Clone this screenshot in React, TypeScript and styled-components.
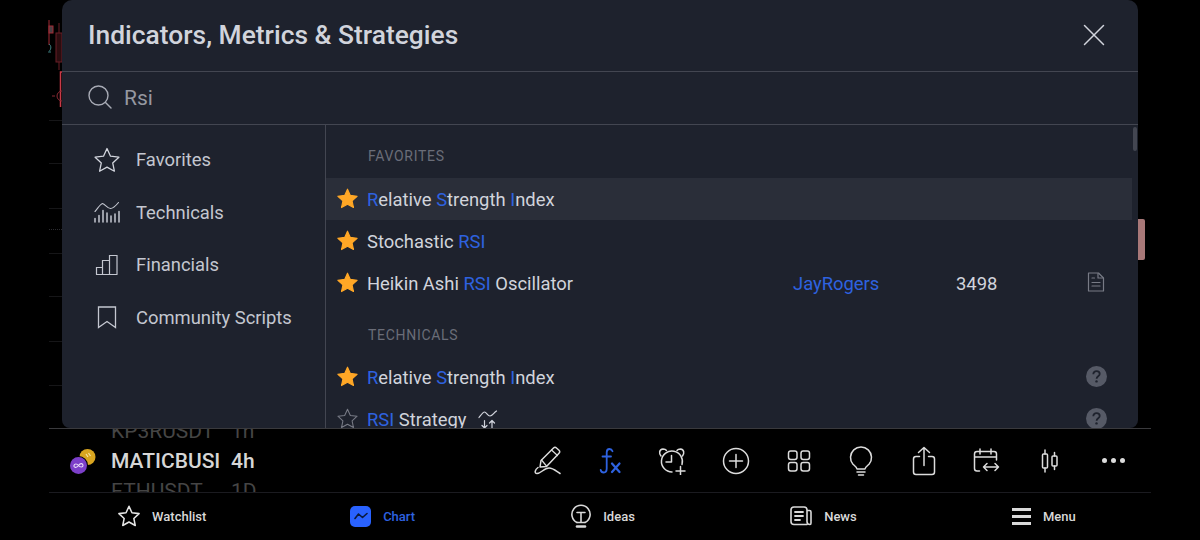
import React from 'react';
import styled, { createGlobalStyle } from 'styled-components';

const Global = createGlobalStyle`
  html, body {
    margin: 0;
    padding: 0;
    background: #000;
    overflow: hidden;
  }
  * { box-sizing: border-box; }
`;

const BLUE = '#2e62e0';

function Star({ size = 26, filled = false, color = '#d1d4dc', width = 1.4 }: { size?: number; filled?: boolean; color?: string; width?: number }) {
  return (
    <svg width={size} height={size} viewBox="0 0 26 26" fill={filled ? color : 'none'} stroke={color} strokeWidth={width} strokeLinejoin="round">
      <path d="M13 1.5l3.5 7.7 8.4 1-6.2 5.7 1.7 8.3L13 20.1l-7.400 4.100 1.700-8.300-6.200-5.700 8.400-1z" />
    </svg>
  );
}

const line = { fill: 'none', stroke: 'currentColor', strokeLinecap: 'round', strokeLinejoin: 'round' } as const;

const TechnicalsIcon = () => (
  <svg width="26" height="22" viewBox="0 0 26 22" {...line} strokeWidth="1.1">
    <path d="M1 10.500C3.500 8 6 3 8.500 2.500c2.500.5 5 5 8 5 3 0 5.500-3 8-6" />
    <path d="M1 17.500V21M5 14.500V21M9 9.500V21M13 12V21M17 15V21M21 13V21M25 10.500V21" strokeWidth="1.500" />
  </svg>
);

const FinancialsIcon = () => (
  <svg width="24" height="22" viewBox="0 0 24 22" {...line} strokeWidth="1.200" strokeLinecap="butt" strokeLinejoin="miter">
    <path d="M1.500 20.500V13.500H7.500V20.500M7.500 20.500V6.500H14.500V20.500M14.500 20.500V1.500H22V20.500M1 20.500H22.500" />
  </svg>
);

const BookmarkIcon = () => (
  <svg width="20" height="23" viewBox="0 0 20 23" {...line} strokeWidth="1.300" strokeLinejoin="miter">
    <path d="M1.500 1H18.500V21.500L10 15.500 1.500 21.500z" />
  </svg>
);

const DocIcon = () => (
  <svg width="18" height="20" viewBox="0 0 18 20" fill="none" stroke="#787b86" strokeWidth="1.200" strokeLinecap="round" strokeLinejoin="round">
    <path d="M1.500 1H11.500L16.500 6V19H1.500z" />
    <path d="M11 1.500V6H16M5 6H7.500M5 10.500H13M5 14H13" />
  </svg>
);

const HelpIcon = () => (
  <svg width="21" height="21" viewBox="0 0 21 21">
    <circle cx="10.500" cy="10.500" r="10.500" fill="#565a66" />
    <path d="M7.300 8.200c0-1.900 1.400-3 3.200-3s3.200 1.100 3.200 2.800c0 2.300-3.100 2.300-3.100 4.700" fill="none" stroke="#1e222d" strokeWidth="1.800" />
    <circle cx="10.500" cy="15.400" r="1.200" fill="#1e222d" />
  </svg>
);

const StrategyIcon = () => (
  <svg width="20" height="19" viewBox="0 0 20 19" fill="none" stroke="#d1d4dc" strokeWidth="1.200" strokeLinecap="round" strokeLinejoin="round">
    <path d="M1 7.500C3 5 5 2 6.500 2c2 0 3 4 5.500 4s3.500-3 6.500-5" />
    <path d="M6.500 10.500V18M4 15.500L6.500 18 9 15.500M14 18V10.500M11.500 13L14 10.500 16.500 13" />
  </svg>
);

const ToolIcon = styled.svg.attrs({ fill: 'none', stroke: 'currentColor', strokeLinecap: 'round', strokeLinejoin: 'round' })`
  display: block;
`;

const tools = [
  {
    key: 'draw',
    w: 28,
    h: 30,
    node: (
      <>
        <path d="M20.500 2c1-1 2-1 3 0l2.500 2.300c1 1 1 2 0 3L13.500 20.500 7 21 8 14.500z" />
        <path d="M8.500 14l5 6M18.500 4l6 5.500" strokeWidth="1.200" />
        <path d="M5 21.500C2 23.500 1 27.500 4 27.500c4 0 7-5.500 12-5.500 4 0 7 3 11 5.500" />
      </>
    ),
  },
  {
    key: 'fx',
    w: 22,
    h: 26,
    blue: true,
    node: (
      <>
        <path d="M13.500 3.200C13 1.800 11.700 1 10.500 1 8.500 1 7.700 2.500 7.700 4.500v16c0 2.500-1 4-3 4-1.500 0-2.700-1-3-2.500M3.500 8.500H12" strokeWidth="1.800" />
        <path d="M13 15.500l7.500 8.500M20.500 15.500L13 24" strokeWidth="2.200" />
      </>
    ),
  },
  {
    key: 'alert',
    w: 30,
    h: 28,
    node: (
      <>
        <path d="M14 25a10.500 10.500 0 1 1 10-7.500" />
        <path d="M13.500 8.500V15H8" />
        <path d="M3 9C.8 6.500 1 2.500 5 2c1.500 0 2.800.5 3.500 1.500M24.500 9c2-2.500 1.800-6.500-2-7-1.500 0-2.800.5-3.500 1.500" />
        <path d="M22.500 19.500V28M18 24h9" />
      </>
    ),
  },
  {
    key: 'plus',
    w: 28,
    h: 28,
    node: (
      <>
        <circle cx="14" cy="14" r="12.500" />
        <path d="M14 7.500V20.500M7.500 14H20.500" />
      </>
    ),
  },
  {
    key: 'layouts',
    w: 24,
    h: 22,
    node: (
      <>
        <rect x="1.500" y="1" width="8.500" height="8.500" rx="2.200" />
        <rect x="14" y="1" width="8.500" height="8.500" rx="2.200" />
        <rect x="1.500" y="12.500" width="8.500" height="8.500" rx="2.200" />
        <rect x="14" y="12.500" width="8.500" height="8.500" rx="2.200" />
      </>
    ),
  },
  {
    key: 'idea',
    w: 24,
    h: 30,
    node: (
      <>
        <path d="M8 23c-.2-1.800-2-3-4-4.700A10.500 10.500 0 1 1 20 18.300C18 20 16.200 21.200 16 23z" />
        <path d="M8 26H16M9.500 29H14.500" />
      </>
    ),
  },
  {
    key: 'share',
    w: 24,
    h: 30,
    node: (
      <>
        <path d="M7.500 10.500H4c-1.500 0-2.500 1-2.500 2.500v13c0 1.500 1 2.500 2.500 2.500h16c1.500 0 2.500-1 2.500-2.500V13c0-1.500-1-2.500-2.500-2.500h-3.500" />
        <path d="M12 19.500V1.500M6.500 6.500L12 1.500l5.500 5" />
      </>
    ),
  },
  {
    key: 'range',
    w: 28,
    h: 25,
    node: (
      <>
        <path d="M6.500 23H4c-1.500 0-2.500-1-2.500-2.500V6c0-1.500 1-2.500 2.500-2.500h17c1.500 0 2.500 1 2.500 2.500v6M1.500 9H23.500M7 1V6M18 1V6" />
        <path d="M10.500 19H25.500M14 15.500L10.500 19l3.500 3.500M22 15.500l3.500 3.500-3.500 3.500" />
      </>
    ),
  },
  {
    key: 'bars',
    w: 18,
    h: 24,
    node: (
      <>
        <rect x="1.500" y="5" width="5" height="14" rx="1" />
        <rect x="11" y="7" width="5" height="10" rx="1" />
        <path d="M4 1V5M4 19V23M13.500 3.500V7M13.500 17V20.500" />
      </>
    ),
  },
];

const filters = [
  { label: 'Favorites', icon: <Star size={26} width={1.3} /> },
  { label: 'Technicals', icon: <TechnicalsIcon /> },
  { label: 'Financials', icon: <FinancialsIcon /> },
  { label: 'Community Scripts', icon: <BookmarkIcon /> },
];

const App = () => (
  <Page>
    <Global />
    <ChartScrap width="16" height="100" viewBox="0 0 16 100" fill="none">
      <path d="M1 2V27" stroke="#a32a35" />
      <rect x="1" y="8" width="4" height="7" fill="#4a4045" stroke="#a32a35" />
      <rect x="8" y="15" width="6" height="29" fill="#2b0d10" stroke="#6a1f27" />
      <path d="M11 5V15M11 44V52" stroke="#6a1f27" />
      <path d="M1 26c3 2 2 6-.500 8H3" stroke="#3e7f80" />
      <path d="M14 54H12.500V89" stroke="#c93a48" strokeWidth="1.500" />
      <path d="M14 73a5 5 0 0 0 0 10M4 78H7" stroke="#8c2b35" />
    </ChartScrap>
    <Grid>
      {[120, 163, 208, 253, 296, 341, 385].map((y) => (
        <GridLine key={y} $y={y} />
      ))}
      <DottedLine />
    </Grid>
    <Handle />
    <ModalArea>
      <Modal>
        <Header>
          <Title>Indicators, Metrics &amp; Strategies</Title>
          <CloseIcon width="22" height="22" viewBox="0 0 22 22" fill="none" stroke="#d1d4dc" strokeWidth="1.500" strokeLinecap="round">
            <path d="M1.500 1.500L20.500 20.500M20.500 1.500L1.500 20.500" />
          </CloseIcon>
        </Header>
        <SearchBar>
          <svg width="24" height="24" viewBox="0 0 24 24" fill="none" stroke="#a8abb5" strokeWidth="1.400" strokeLinecap="round">
            <circle cx="10.500" cy="10.500" r="9.500" />
            <path d="M17.500 17.500L23 23" />
          </svg>
          <SearchText>Rsi</SearchText>
        </SearchBar>
        <Body>
          <Sidebar>
            {filters.map((f) => (
              <Filter key={f.label}>
                <FilterIcon>{f.icon}</FilterIcon>
                {f.label}
              </Filter>
            ))}
          </Sidebar>
          <List>
            <Section>Favorites</Section>
            <Row $active>
              <Star size={21} filled color="#ffa726" />
              <Name>
                <Hit>R</Hit>elative <Hit>S</Hit>trength <Hit>I</Hit>ndex
              </Name>
            </Row>
            <Row>
              <Star size={21} filled color="#ffa726" />
              <Name>
                Stochastic <Hit>RSI</Hit>
              </Name>
            </Row>
            <Row>
              <Star size={21} filled color="#ffa726" />
              <Name>
                Heikin Ashi <Hit>RSI</Hit> Oscillator
              </Name>
              <Author>JayRogers</Author>
              <Name>3498</Name>
              <RowIcon>
                <DocIcon />
              </RowIcon>
            </Row>
            <Section>Technicals</Section>
            <Row>
              <Star size={21} filled color="#ffa726" />
              <Name>
                <Hit>R</Hit>elative <Hit>S</Hit>trength <Hit>I</Hit>ndex
              </Name>
              <span />
              <span />
              <RowIcon>
                <HelpIcon />
              </RowIcon>
            </Row>
            <Row>
              <Star size={21} color="#787b86" width={1.3} />
              <Name>
                <Hit>RSI</Hit> Strategy
                <StrategyMark>
                  <StrategyIcon />
                </StrategyMark>
              </Name>
              <span />
              <span />
              <RowIcon>
                <HelpIcon />
              </RowIcon>
            </Row>
            <Thumb />
          </List>
        </Body>
      </Modal>
    </ModalArea>
    <Toolbar>
      <Coin width="28" height="28" viewBox="0 0 28 28">
        <circle cx="18.500" cy="10" r="8" fill="#d9a520" />
        <path d="M17 7l2 3M19.500 6l2 3" stroke="#f5e2a0" strokeWidth="1.200" />
        <circle cx="9.500" cy="18.500" r="9.500" fill="#000" />
        <circle cx="9.500" cy="18.500" r="8.500" fill="#7c3fc9" />
        <path d="M9.500 18.500c-1.500-2-4-2-4.500 0s2.500 3 4.500 0 4.500-2 4.500 0-3 2-4.500 0z" fill="none" stroke="#e9dcf8" strokeWidth="1.100" />
      </Coin>
      <Picker>
        <PickerRow $dim>
          <Symbol>KP3RUSDT</Symbol>
          <span>1h</span>
        </PickerRow>
        <PickerRow>
          <Symbol>MATICBUSI</Symbol>
          <span>4h</span>
        </PickerRow>
        <PickerRow $dim>
          <Symbol>ETHUSDT</Symbol>
          <span>1D</span>
        </PickerRow>
      </Picker>
      <Tools>
        {tools.map((t) => (
          <Tool key={t.key} $blue={t.blue}>
            <ToolIcon width={t.w} height={t.h} viewBox={`0 0 ${t.w} ${t.h}`} strokeWidth="1.500">
              {t.node}
            </ToolIcon>
          </Tool>
        ))}
        <Tool>
          <Dots>
            <i />
            <i />
            <i />
          </Dots>
        </Tool>
      </Tools>
    </Toolbar>
    <Nav>
      <NavItem>
        <Star size={22} color="#e6e6e6" width={1.8} />
        Watchlist
      </NavItem>
      <NavItem $active>
        <ChartBadge>
          <svg width="14" height="8" viewBox="0 0 14 8" fill="none" stroke="#0b1a3d" strokeWidth="1.600" strokeLinecap="round" strokeLinejoin="round">
            <path d="M1 6.500L4.500 2 8.500 5.500 13 1.500" />
          </svg>
        </ChartBadge>
        Chart
      </NavItem>
      <NavItem>
        <svg width="20" height="24" viewBox="0 0 20 24" fill="none" stroke="#d9d9d9" strokeWidth="1.600" strokeLinecap="round" strokeLinejoin="round">
          <path d="M6 18.500A9.100 9.100 0 1 1 14 18.500" />
          <path d="M6 8.500h8M10 8.500V18M6 18.500H14" />
          <path d="M6 22.500H14" strokeWidth="2.600" />
        </svg>
        Ideas
      </NavItem>
      <NavItem>
        <svg width="22" height="20" viewBox="0 0 22 20" fill="none" stroke="#d9d9d9" strokeWidth="1.600" strokeLinecap="round" strokeLinejoin="round">
          <path d="M17 18.500H4c-2 0-3-1-3-3V4c0-2 1-3 3-3h10c2 0 3 1 3 3v11.500c0 2 1.500 3 3 3 .7 0 1-.7 1-1.500V6c0-1-.7-1.500-1.500-1.500H17" />
          <path d="M5 6H13M5 10H13M5 14H10" strokeWidth="1.800" />
        </svg>
        News
      </NavItem>
      <NavItem>
        <MenuBars>
          <i />
          <i />
          <i />
        </MenuBars>
        Menu
      </NavItem>
    </Nav>
  </Page>
);

export default App;

const Page = styled.div`
  position: relative;
  width: 1200px;
  height: 540px;
  background: #000;
  overflow: hidden;
  font-family: Roboto, 'Liberation Sans', sans-serif;
  display: flex;
  flex-direction: column;
`;

const ChartScrap = styled.svg`
  position: absolute;
  left: 48px;
  top: 18px;
  overflow: visible;
`;

const Grid = styled.div`
  position: absolute;
  left: 49px;
  top: 0;
  width: 13px;
  height: 428px;
`;

const GridLine = styled.div<{ $y: number }>`
  position: absolute;
  left: 0;
  right: 0;
  top: ${(p) => p.$y}px;
  height: 1px;
  background: #161618;
`;

const DottedLine = styled.div`
  position: absolute;
  left: 0;
  right: 0;
  top: 229px;
  border-top: 1px dotted #2c2c30;
`;

const Handle = styled.div`
  position: absolute;
  left: 1138px;
  top: 219px;
  width: 7px;
  height: 41px;
  background: #a87878;
  border-radius: 0 2px 2px 0;
`;

const ModalArea = styled.div`
  position: relative;
  height: 428px;
  padding: 0 62px;
`;

const Modal = styled.div`
  height: 100%;
  background: #1e222d;
  border-radius: 10px 10px 8px 8px;
  display: flex;
  flex-direction: column;
  overflow: hidden;
`;

const Header = styled.div`
  height: 72px;
  flex: none;
  padding: 0 33px 2px 26px;
  display: flex;
  align-items: center;
  justify-content: space-between;
  border-bottom: 1px solid #434651;
`;

const Title = styled.div`
  font-size: 26.4px;
  font-weight: 500;
  color: #d1d4dc;
`;

const CloseIcon = styled.svg`
  display: block;
`;

const SearchBar = styled.div`
  height: 53px;
  flex: none;
  padding: 0 0 2px 26px;
  display: flex;
  align-items: center;
  gap: 12px;
  border-bottom: 1px solid #434651;
`;

const SearchText = styled.div`
  font-size: 21px;
  padding-top: 2px;
  color: #9598a1;
`;

const Body = styled.div`
  flex: 1;
  min-height: 0;
  display: flex;
`;

const Sidebar = styled.div`
  width: 264px;
  flex: none;
  padding-top: 8.5px;
  border-right: 1px solid #434651;
`;

const Filter = styled.div`
  height: 52.5px;
  display: flex;
  align-items: center;
  font-size: 18.4px;
  color: #c4c7d0;
`;

const FilterIcon = styled.div`
  width: 74px;
  padding-left: 16px;
  color: #c4c7d0;
  display: flex;
  justify-content: center;
`;

const List = styled.div`
  position: relative;
  flex: 1;
  min-width: 0;
  padding-right: 6px;
  overflow: hidden;
`;

const Thumb = styled.div`
  position: absolute;
  right: 1px;
  top: 2px;
  width: 4px;
  height: 24px;
  background: #434651;
  border-radius: 2px;
`;

const Section = styled.div`
  height: 52px;
  padding: 23px 0 0 42px;
  font-size: 14px;
  line-height: 16px;
  letter-spacing: 0.7px;
  text-transform: uppercase;
  color: #6a6d78;
  &:first-child {
    height: 53px;
  }
`;

const Row = styled.div<{ $active?: boolean }>`
  height: 42px;
  padding: 0 0 2px 11px;
  display: grid;
  grid-template-columns: 30px 426px 163px 1fr 72px;
  align-items: center;
  background: ${(p) => (p.$active ? '#2a2e39' : 'transparent')};
  svg {
    display: block;
  }
`;

const Name = styled.div`
  display: flex;
  align-items: center;
  white-space: pre;
  font-size: 18.4px;
  padding-top: 2px;
  color: #d1d4dc;
`;

const Hit = styled.span`
  color: ${BLUE};
`;

const Author = styled.div`
  font-size: 18.4px;
  padding-top: 2px;
  color: ${BLUE};
`;

const RowIcon = styled.div`
  display: flex;
  justify-content: center;
`;

const StrategyMark = styled.span`
  margin-left: 12px;
`;

const Toolbar = styled.div`
  height: 65px;
  flex: none;
  margin: 0 49px;
  padding-right: 6.5px;
  display: flex;
  align-items: center;
  border-top: 1px solid #3a3a3d;
  border-bottom: 1px solid #1b1b20;
`;

const Coin = styled.svg`
  flex: none;
  margin-left: 20px;
  margin-right: 14px;
`;

const Picker = styled.div`
  height: 63px;
  overflow: hidden;
  display: flex;
  flex-direction: column;
  justify-content: center;
`;

const PickerRow = styled.div<{ $dim?: boolean }>`
  flex: none;
  height: 30px;
  display: flex;
  align-items: center;
  font-size: 21px;
  font-weight: ${(p) => (p.$dim ? 400 : 500)};
  color: ${(p) => (p.$dim ? '#454545' : '#d6d6d6')};
`;

const Symbol = styled.span`
  width: 120px;
`;

const Tools = styled.div`
  margin-left: auto;
  display: flex;
  align-items: center;
`;

const Tool = styled.div<{ $blue?: boolean }>`
  width: 62.9px;
  display: flex;
  justify-content: center;
  color: ${(p) => (p.$blue ? BLUE : '#dcdcdc')};
`;

const Dots = styled.div`
  display: flex;
  gap: 4px;
  i {
    width: 5px;
    height: 5px;
    border-radius: 50%;
    background: #dcdcdc;
  }
`;

const Nav = styled.div`
  flex: 1;
  margin: 0 49px;
  display: flex;
  padding-bottom: 1px;
`;

const NavItem = styled.div<{ $active?: boolean }>`
  flex: 1;
  padding-left: 6px;
  display: flex;
  align-items: center;
  justify-content: center;
  gap: 12px;
  font-size: 13px;
  font-weight: 500;
  color: ${(p) => (p.$active ? BLUE : '#d9d9d9')};
`;

const ChartBadge = styled.div`
  width: 21px;
  height: 21px;
  border-radius: 5px;
  background: #2962ff;
  display: flex;
  align-items: center;
  justify-content: center;
`;

const MenuBars = styled.div`
  width: 19px;
  display: flex;
  flex-direction: column;
  gap: 4px;
  i {
    display: block;
    height: 3px;
    background: #d9d9d9;
  }
`;
